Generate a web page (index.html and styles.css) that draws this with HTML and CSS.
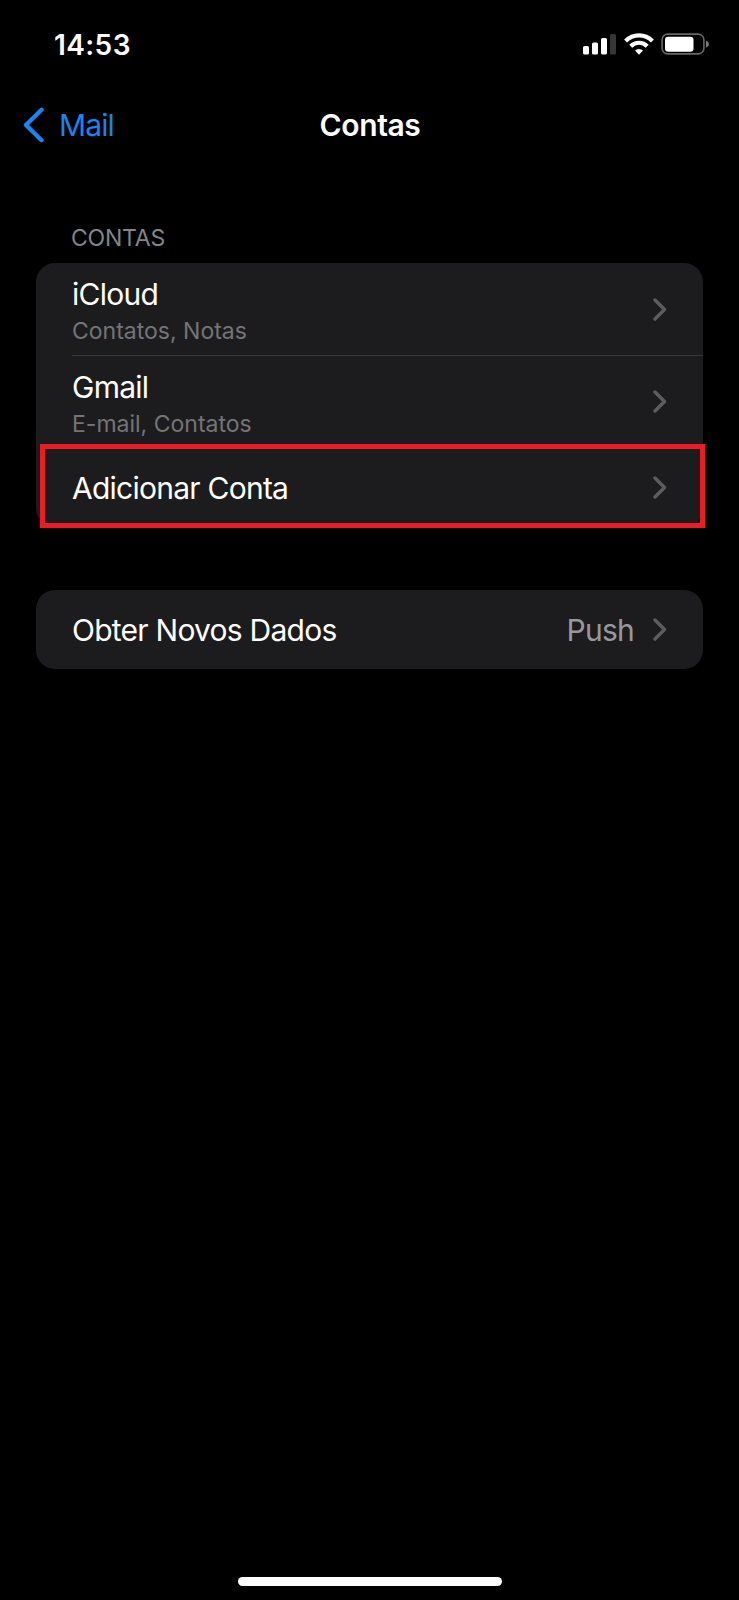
FILE: index.html
```
<!DOCTYPE html>
<html lang="pt-BR">
<head>
  <meta charset="utf-8">
  <title>Contas</title>
  <link rel="stylesheet" href="styles.css">
</head>
<body>
  <div class="screen">
    <div class="status-bar">
      <span class="time">14:53</span>
      <svg class="status-icons" width="128" height="24" viewBox="0 0 128 24">
        <!-- signal -->
        <rect x="1" y="13" width="6" height="8.5" rx="1.6" fill="#fff"/>
        <rect x="10" y="9.5" width="6" height="12" rx="1.6" fill="#fff"/>
        <rect x="19" y="5" width="6" height="16.5" rx="1.6" fill="#fff"/>
        <rect x="28" y="1" width="6" height="20.5" rx="1.6" fill="#363636"/>
        <!-- wifi -->
        <g fill="none" stroke="#fff" stroke-width="4.2">
          <path d="M43.6 7.9a19 19 0 0 1 26.8 0"/>
          <path d="M48.8 13.2a11.5 11.5 0 0 1 16.4 0"/>
        </g>
        <path d="M57 21.7l-4-4.2a5.8 5.8 0 0 1 8 0z" fill="#fff"/>
        <!-- battery -->
        <rect x="80.1" y="1.1" width="41.8" height="19.8" rx="5.6" fill="none" stroke="#666" stroke-width="1.6"/>
        <rect x="83" y="3.8" width="28.5" height="15" rx="3.2" fill="#fff"/>
        <path d="M124 7.6q3 1.1 3 3.6t-3 3.6z" fill="#777"/>
      </svg>
    </div>
    <div class="nav-bar">
      <a class="back">
        <svg width="22" height="36" viewBox="0 0 22 36"><path d="M18.500 2.800L3 18l15.500 15.200"/></svg>
        <span>Mail</span>
      </a>
      <h1 class="title">Contas</h1>
    </div>
    <h2 class="section-title">CONTAS</h2>
    <div class="group">
      <div class="row account">
        <div class="text">
          <div class="label">iCloud</div>
          <div class="detail">Contatos, Notas</div>
        </div>
        <svg class="chevron" width="14" height="23" viewBox="0 0 14 23"><path d="M2 2l9.500 9.500L2 21"/></svg>
      </div>
      <div class="row account line">
        <div class="text">
          <div class="label">Gmail</div>
          <div class="detail">E-mail, Contatos</div>
        </div>
        <svg class="chevron" width="14" height="23" viewBox="0 0 14 23"><path d="M2 2l9.500 9.500L2 21"/></svg>
      </div>
      <div class="row single">
        <div class="label">Adicionar Conta</div>
        <svg class="chevron" width="14" height="23" viewBox="0 0 14 23"><path d="M2 2l9.500 9.500L2 21"/></svg>
        <div class="highlight"></div>
      </div>
    </div>
    <div class="group">
      <div class="row single">
        <div class="label">Obter Novos Dados</div>
        <div class="value">Push</div>
        <svg class="chevron" width="14" height="23" viewBox="0 0 14 23"><path d="M2 2l9.500 9.500L2 21"/></svg>
      </div>
    </div>
    <div class="home-bar"></div>
  </div>
</body>
</html>
```
FILE: styles.css
```
body {
  margin: 0;
  background-color: #000;
  color: #fff;
  font-family: Inter, "Liberation Sans", sans-serif;
}
.screen {
  display: flex;
  flex-direction: column;
  box-sizing: border-box;
  width: 739px;
  height: 1600px;
  padding-bottom: 14px;
}
.status-bar {
  display: flex;
  justify-content: space-between;
  padding: 27px 29px 0 54px;
  height: 54px;
}
.time {
  font-size: 28px;
  line-height: 36px;
  font-weight: 600;
  letter-spacing: 0.4px;
}
.status-icons {
  margin-top: 6px;
}
.nav-bar {
  display: grid;
  grid-template-columns: 1fr auto 1fr;
  align-items: center;
  height: 88px;
  padding: 0 22px 0 23px;
}
.back {
  display: flex;
  align-items: center;
  gap: 14px;
  font-size: 30px;
  line-height: 36px;
  letter-spacing: -0.9px;
  color: #1b84ee;
}
.back path {
  fill: none;
  stroke: #1b84ee;
  stroke-width: 4.4;
  stroke-linecap: round;
  stroke-linejoin: round;
}
.title {
  margin: 0;
  font-size: 30px;
  line-height: 36px;
  font-weight: 600;
  letter-spacing: -0.4px;
}
.section-title {
  margin: 54px 0 10px 71px;
  font-size: 23px;
  line-height: 30px;
  font-weight: 400;
  letter-spacing: -0.2px;
  color: #848488;
}
.group {
  margin: 0 36px 63px;
  border-radius: 19px;
  background-color: #1c1c1e;
}
.row {
  display: flex;
  align-items: center;
  position: relative;
  padding: 0 36px;
  box-sizing: border-box;
}
.account {
  height: 92px;
}
.line {
  height: 93px;
  background: linear-gradient(#38383a, #38383a) 36px 0 / 100% 1px no-repeat;
}
.single {
  height: 79px;
}
.text {
  padding-top: 5px;
}
.label {
  font-size: 30px;
  line-height: 36px;
  letter-spacing: -0.75px;
}
.detail {
  margin-top: 3px;
  font-size: 23px;
  line-height: 32px;
  color: #747477;
}
.value {
  margin-left: auto;
  margin-right: 19px;
  font-size: 30px;
  line-height: 36px;
  letter-spacing: -0.75px;
  color: #98989f;
}
.chevron {
  margin-left: auto;
}
.value + .chevron {
  margin-left: 0;
}
.chevron path {
  fill: none;
  stroke: #5d5d60;
  stroke-width: 3.4;
  stroke-linecap: round;
  stroke-linejoin: round;
}
/* red frame around the row to tap */
.highlight {
  position: absolute;
  top: -4px;
  left: 4px;
  right: -2px;
  bottom: -1px;
  border: 5px solid #ec1c24;
}
.home-bar {
  width: 264px;
  height: 9px;
  margin: auto auto 0;
  border-radius: 5px;
  background-color: #fff;
}
```
